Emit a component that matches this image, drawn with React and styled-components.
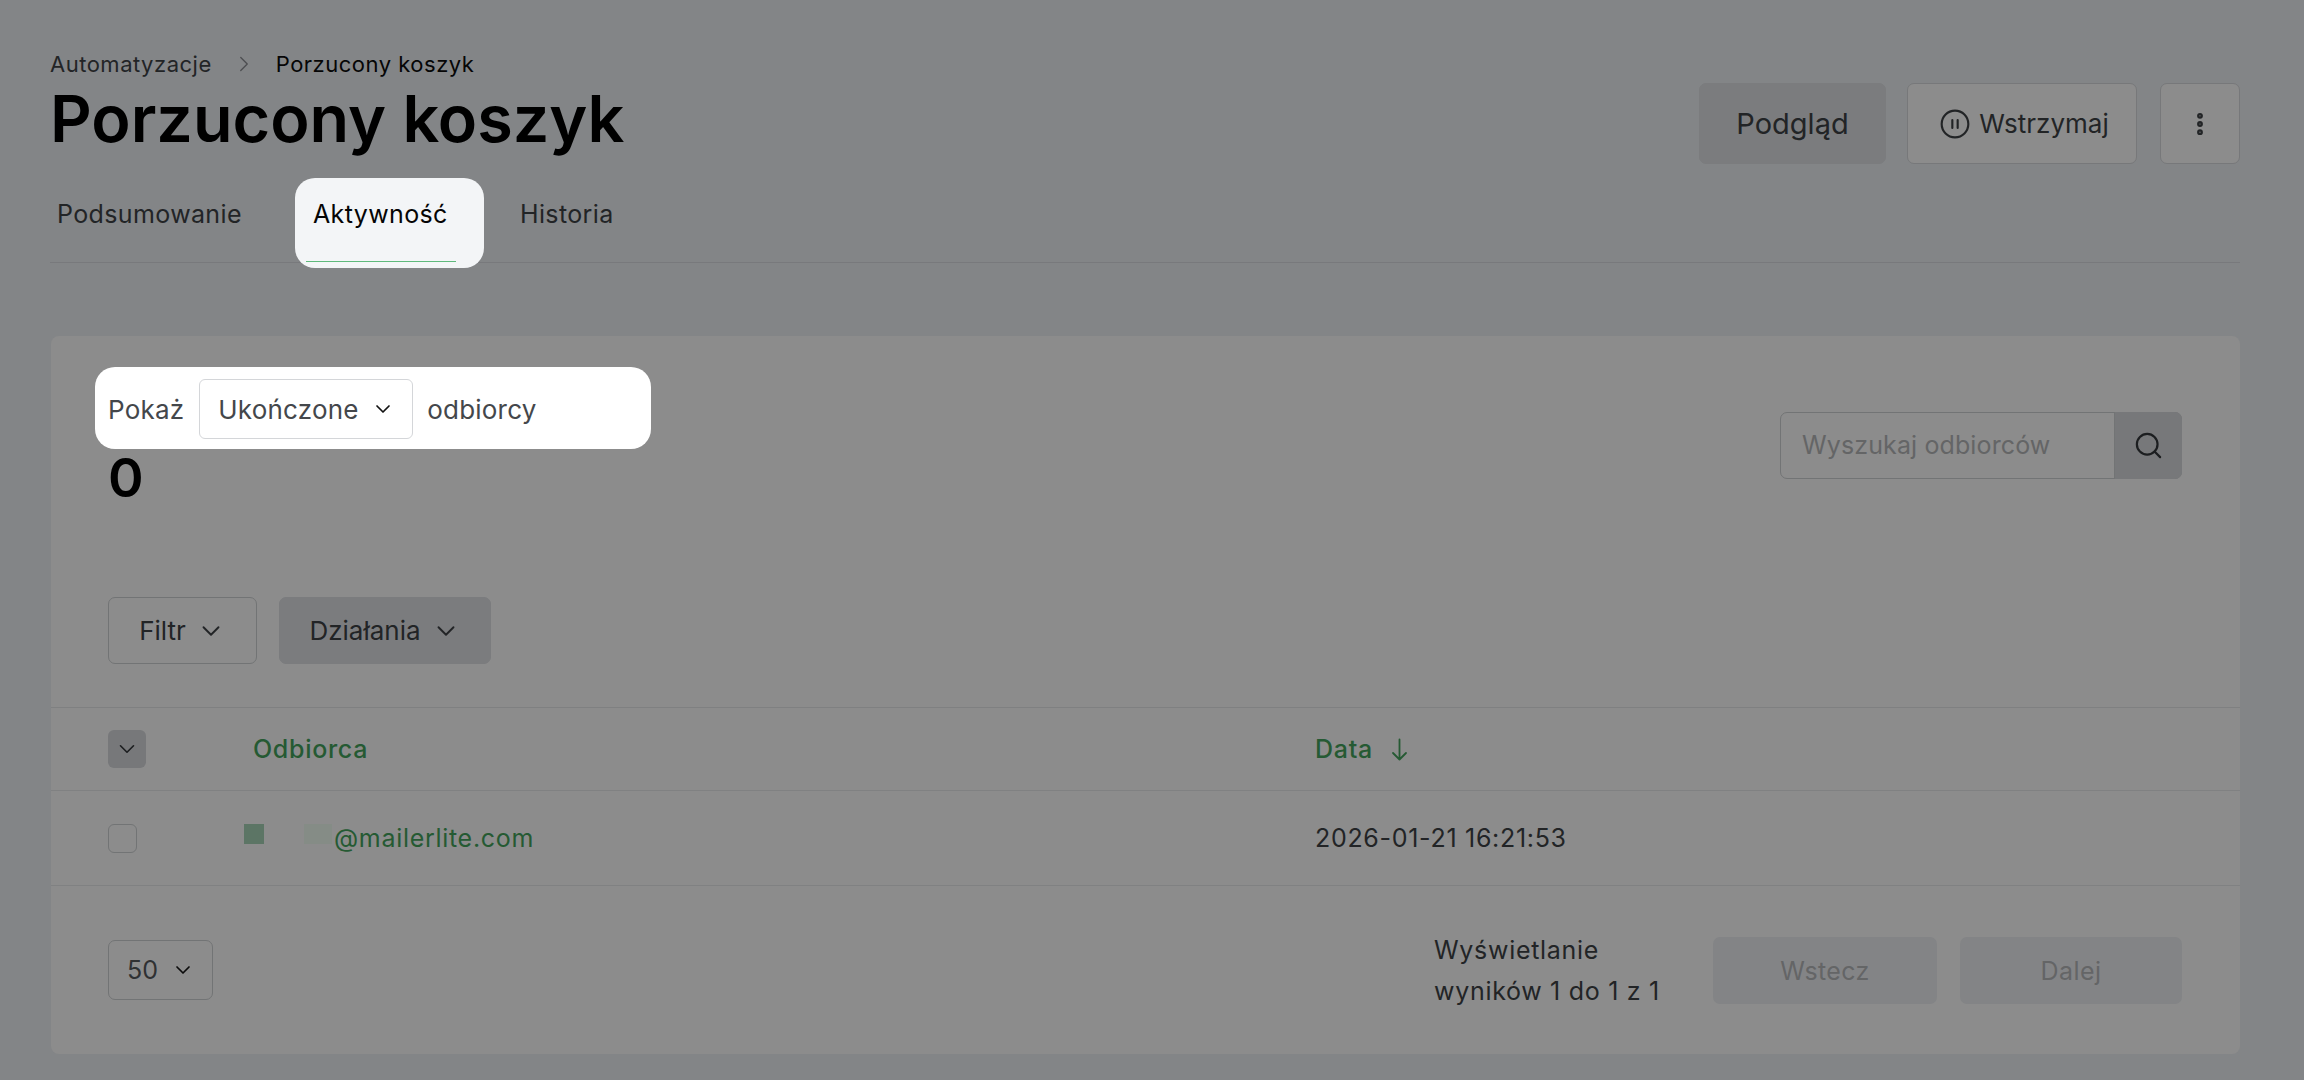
import React from 'react'
import styled, { createGlobalStyle } from 'styled-components'
import { ChevronDown, ChevronRight, Search, CirclePause, EllipsisVertical } from 'lucide-react'

const Global = createGlobalStyle`
  html, body {
    margin: 0;
    background: #838587;
    font-family: Inter, "Liberation Sans", sans-serif;
    overflow: hidden;
  }
`

const Page = styled.div`
  width: 2304px;
  height: 1080px;
  box-sizing: border-box;
  padding: 50px 64px 0 50px;
  background: #838587;
`

const Header = styled.div`
  display: flex;
  justify-content: space-between;
  align-items: flex-start;
`

const Crumbs = styled.div`
  display: flex;
  align-items: center;
  height: 28px;
  font-size: 22px;
  letter-spacing: 0.5px;
  color: #222426;
  gap: 19px;
  b {
    font-weight: 400;
    color: #060606;
  }
  svg {
    color: #4c4d50;
  }
`

const Title = styled.h1`
  margin: 9px 0 0;
  font-size: 64.7px;
  line-height: 64px;
  font-weight: 600;
  color: #000;
`

const Actions = styled.div`
  display: flex;
  margin-top: 33px;
`

const ActionButton = styled.div`
  display: flex;
  align-items: center;
  justify-content: center;
  box-sizing: border-box;
  height: 81px;
  width: ${(p) => p.$w}px;
  margin-left: ${(p) => p.$ml || 0}px;
  padding-left: ${(p) => p.$pl || 0}px;
  gap: 8px;
  border-radius: 7px;
  font-size: ${(p) => p.$fs || 24}px;
  color: #222426;
  background: ${(p) => (p.$solid ? '#7b7c7e' : '#8c8c8c')};
  border: 1px solid ${(p) => (p.$solid ? '#7b7c7e' : '#77787a')};
`

const Tabs = styled.div`
  display: flex;
  height: 84px;
  margin-top: 14px;
  border-bottom: 1px solid #78797c;
`

const Tab = styled.div`
  box-sizing: border-box;
  height: 90px;
  font-size: 25px;
  letter-spacing: 0.37px;
  line-height: 72px;
  position: relative;
  color: ${(p) => (p.$active ? '#050505' : '#222426')};
  padding: ${(p) => (p.$active ? '0 18px' : '0 7px')};
  width: ${(p) => p.$w}px;
  margin-right: ${(p) => p.$mr || 0}px;
  background: ${(p) => (p.$active ? '#f3f5f7' : 'transparent')};
  border-radius: 20px;
`

const TabLine = styled.span`
  position: absolute;
  left: 11px;
  right: 28px;
  bottom: 6px;
  height: 1px;
  background: #5fb97c;
`

const Card = styled.div`
  margin: 73px 0 0 1px;
  height: 718px;
  background: #8c8c8c;
  border-radius: 8px;
  display: flex;
  flex-direction: column;
`

const Top = styled.div`
  height: 372px;
  box-sizing: border-box;
  padding: 31px 58px 0 57px;
  border-bottom: 1px solid #7f8081;
`

const TopRow = styled.div`
  display: flex;
  justify-content: space-between;
  align-items: flex-start;
`

const Spot = styled.div`
  display: flex;
  align-items: center;
  box-sizing: border-box;
  width: 556px;
  height: 82px;
  margin-left: -13px;
  padding: 2px 0 0 13px;
  background: #fff;
  border-radius: 20px;
  font-size: 26px;
  letter-spacing: 0.2px;
  color: #44474b;
`

const Select = styled.div`
  display: flex;
  align-items: center;
  justify-content: space-between;
  box-sizing: border-box;
  width: 214px;
  height: 60px;
  margin: 0 14px 0 15px;
  padding: 0 17px 0 18px;
  border: 1px solid #d4d6d9;
  border-radius: 6px;
  svg {
    color: #111;
  }
`

const Count = styled.div`
  margin-top: -1px;
  font-size: 54px;
  line-height: 60px;
  font-weight: 600;
  color: #000;
`

const SearchBox = styled.div`
  display: flex;
  box-sizing: border-box;
  width: 402px;
  height: 67px;
  margin-top: 45px;
  border: 1px solid #727475;
  border-radius: 7px;
  font-size: 25px;
  letter-spacing: 0.12px;
  color: #646566;
`

const SearchText = styled.div`
  flex: 1;
  line-height: 65px;
  padding-left: 21px;
`

const SearchButton = styled.div`
  display: flex;
  align-items: center;
  justify-content: center;
  width: 67px;
  margin: -1px;
  background: #77787a;
  border-left: 1px solid #727475;
  border-radius: 0 7px 7px 0;
  color: #1c1e20;
`

const Filters = styled.div`
  display: flex;
  gap: 22px;
  margin-top: 89px;
`

const FilterButton = styled.div`
  display: flex;
  align-items: center;
  justify-content: center;
  gap: 10px;
  box-sizing: border-box;
  height: 67px;
  width: ${(p) => p.$w}px;
  border-radius: 7px;
  font-size: 26px;
  color: #222426;
  background: ${(p) => (p.$solid ? '#7b7c7e' : 'transparent')};
  border: 1px solid ${(p) => (p.$solid ? '#7b7c7e' : '#727475')};
`

const Row = styled.div`
  display: grid;
  grid-template-columns: 145px 1062px 1fr;
  align-items: center;
  box-sizing: border-box;
  height: ${(p) => p.$h}px;
  padding-left: 57px;
  border-bottom: 1px solid #808182;
  font-size: 25px;
  color: #222426;
  letter-spacing: 0.7px;
`

const HeadCheck = styled.div`
  display: flex;
  align-items: center;
  justify-content: center;
  width: 38px;
  height: 38px;
  background: #77787a;
  border-radius: 6px;
  color: #1c1e20;
`

const Check = styled.div`
  box-sizing: border-box;
  width: 29px;
  height: 29px;
  border: 1px solid #727475;
  border-radius: 6px;
`

const HeadCell = styled.div`
  display: flex;
  align-items: center;
  gap: 18px;
  color: #255a33;
  font-weight: 500;
`

const Email = styled.div`
  display: flex;
  align-items: center;
  margin-left: -9px;
  color: #255a33;
`

const Redacted = styled.span`
  width: ${(p) => p.$w}px;
  height: 20px;
  margin: -9px ${(p) => p.$mr}px 0 0;
  background: ${(p) => p.$c};
`

const Footer = styled.div`
  flex: 1;
  display: flex;
  align-items: center;
  padding: 0 58px 0 57px;
`

const PageSize = styled.div`
  display: flex;
  align-items: center;
  justify-content: space-between;
  box-sizing: border-box;
  width: 105px;
  height: 60px;
  padding: 0 17px 0 18px;
  border: 1px solid #727475;
  border-radius: 7px;
  font-size: 25px;
  color: #2f3133;
  svg {
    color: #0c0c0c;
  }
`

const Results = styled.div`
  margin: 1px 0 0 auto;
  width: 279px;
  font-size: 25px;
  line-height: 41px;
  letter-spacing: 0.7px;
  color: #222426;
`

const PageButton = styled.div`
  display: flex;
  align-items: center;
  justify-content: center;
  width: ${(p) => p.$w}px;
  height: 67px;
  margin: 1px 0 0 ${(p) => p.$ml}px;
  background: #838486;
  border-radius: 7px;
  font-size: 25px;
  letter-spacing: 0.4px;
  color: #646566;
`

function SortArrow() {
  return (
    <svg width="17" height="23" viewBox="0 0 17 23" fill="none" stroke="currentColor" strokeWidth="1.8" strokeLinecap="round" strokeLinejoin="round">
      <path d="M8.5 1.5v20M2 15l6.500 6.500 6.500-6.500" />
    </svg>
  )
}

export default function App() {
  return (
    <Page>
      <Global />
      <Header>
        <div>
          <Crumbs>
            Automatyzacje
            <ChevronRight size={26} strokeWidth={1.2} />
            <b>Porzucony koszyk</b>
          </Crumbs>
          <Title>Porzucony koszyk</Title>
        </div>
        <Actions>
          <ActionButton $solid $w={187} $fs={29}>Podgląd</ActionButton>
          <ActionButton $w={230} $ml={21} $fs={26} $pl={4}>
            <CirclePause size={32} strokeWidth={1.6} />
            Wstrzymaj
          </ActionButton>
          <ActionButton $w={80} $ml={23}>
            <EllipsisVertical size={28} strokeWidth={3} />
          </ActionButton>
        </Actions>
      </Header>
      <Tabs>
        <Tab $w={245}>Podsumowanie</Tab>
        <Tab $active $w={189} $mr={29}>
          Aktywność
          <TabLine />
        </Tab>
        <Tab $w={160}>Historia</Tab>
      </Tabs>
      <Card>
        <Top>
          <TopRow>
            <div>
              <Spot>
                Pokaż
                <Select>
                  Ukończone
                  <ChevronDown size={24} strokeWidth={1.7} />
                </Select>
                odbiorcy
              </Spot>
              <Count>0</Count>
            </div>
            <SearchBox>
              <SearchText>Wyszukaj odbiorców</SearchText>
              <SearchButton>
                <Search size={31} strokeWidth={1.7} />
              </SearchButton>
            </SearchBox>
          </TopRow>
          <Filters>
            <FilterButton $w={149}>
              Filtr
              <ChevronDown size={30} strokeWidth={1.5} />
            </FilterButton>
            <FilterButton $solid $w={212}>
              Działania
              <ChevronDown size={30} strokeWidth={1.5} />
            </FilterButton>
          </Filters>
        </Top>
        <Row $h={83}>
          <HeadCheck>
            <ChevronDown size={26} strokeWidth={1.5} />
          </HeadCheck>
          <HeadCell>Odbiorca</HeadCell>
          <HeadCell>
            Data
            <SortArrow />
          </HeadCell>
        </Row>
        <Row $h={95}>
          <Check />
          <Email>
            <Redacted $w={20} $mr={40} $c="#5c7565" />
            <Redacted $w={28} $mr={2} $c="#858c86" />
            @mailerlite.com
          </Email>
          <div>2026-01-21 16:21:53</div>
        </Row>
        <Footer>
          <PageSize>
            50
            <ChevronDown size={24} strokeWidth={1.7} />
          </PageSize>
          <Results>Wyświetlanie<br />wyników 1 do 1 z 1</Results>
          <PageButton $w={224} $ml={0}>Wstecz</PageButton>
          <PageButton $w={222} $ml={23}>Dalej</PageButton>
        </Footer>
      </Card>
    </Page>
  )
}
